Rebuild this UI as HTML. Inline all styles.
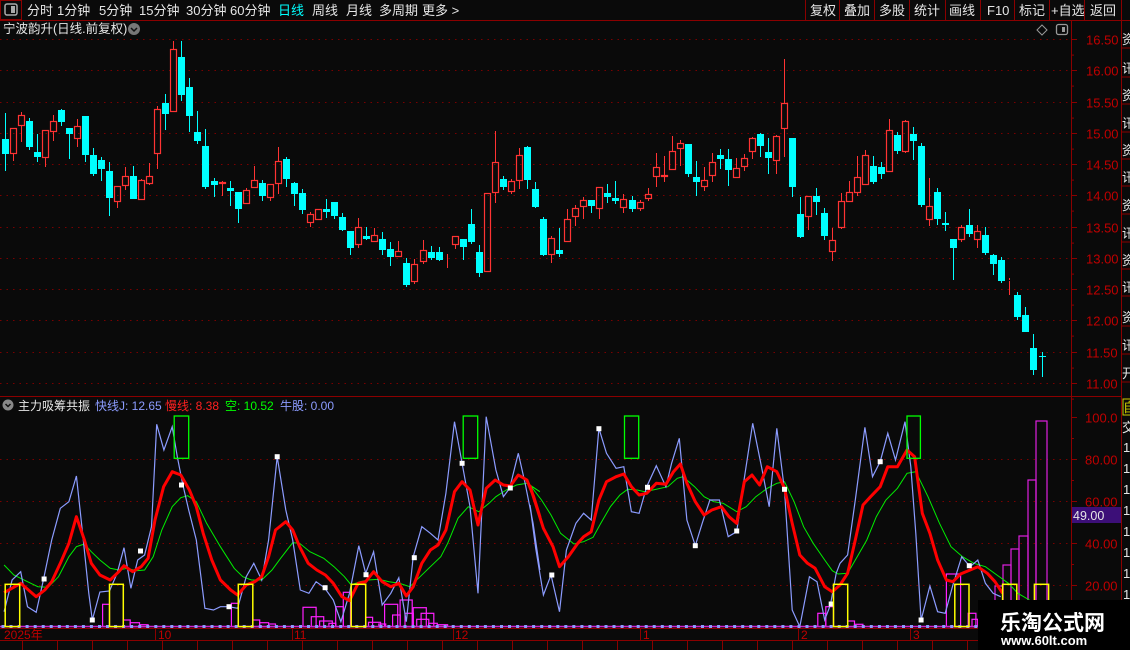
<!DOCTYPE html>
<html><head><meta charset="utf-8">
<style>
html,body{margin:0;padding:0;background:#0a0a0a;overflow:hidden}
body{width:1130px;height:650px;position:relative;font-family:"Liberation Sans","Noto Sans CJK SC",sans-serif}
svg{position:absolute;left:0;top:0}
text{font-family:"Liberation Sans","Noto Sans CJK SC",sans-serif}
</style></head><body>
<svg id="s" width="1130" height="650" xmlns="http://www.w3.org/2000/svg">
<rect width="1130" height="650" fill="#0a0a0a"/>
<!-- toolbar -->
<rect x="0" y="0" width="1130" height="20" fill="#0a0a0a"/>
<line x1="0" y1="20.5" x2="1130" y2="20.5" stroke="#8b0000"/>
<rect x="0.5" y="0.5" width="21" height="19" fill="none" stroke="#8b0000"/>
<rect x="5" y="4" width="12" height="11" rx="2" fill="none" stroke="#aaa" stroke-width="1.5"/>
<rect x="11" y="6" width="4" height="7" fill="#aaa"/>
<g font-size="13" fill="#e6e6e6">
<text x="27" y="15">分时</text><text x="57" y="15">1分钟</text><text x="99" y="15">5分钟</text>
<text x="139" y="15">15分钟</text><text x="186" y="15">30分钟</text><text x="230" y="15">60分钟</text>
<text x="278" y="15" fill="#00ffff">日线</text><text x="312" y="15">周线</text><text x="346" y="15">月线</text>
<text x="379" y="15">多周期</text><text x="422" y="15">更多 &gt;</text>
</g>
<g stroke="#8b0000"><line x1="805.5" y1="0" x2="805.5" y2="20"/><line x1="839.5" y1="0" x2="839.5" y2="20"/><line x1="874.5" y1="0" x2="874.5" y2="20"/><line x1="909.5" y1="0" x2="909.5" y2="20"/><line x1="945.5" y1="0" x2="945.5" y2="20"/><line x1="980.5" y1="0" x2="980.5" y2="20"/><line x1="1014.5" y1="0" x2="1014.5" y2="20"/><line x1="1049.5" y1="0" x2="1049.5" y2="20"/><line x1="1084.5" y1="0" x2="1084.5" y2="20"/><line x1="1121.5" y1="0" x2="1121.5" y2="20"/></g>
<g font-size="13" fill="#e6e6e6">
<text x="810" y="15">复权</text><text x="844" y="15">叠加</text><text x="879" y="15">多股</text><text x="914" y="15">统计</text>
<text x="949" y="15">画线</text><text x="987" y="15">F10</text><text x="1019" y="15">标记</text><text x="1051" y="15">+自选</text><text x="1090" y="15">返回</text>
</g>
<!-- title -->
<text x="3" y="33" font-size="12.5" fill="#e6e6e6">宁波韵升(日线.前复权)</text>
<circle cx="134" cy="29" r="6" fill="#777"/><path d="M131 28 L134 31 L137 28" stroke="#111" stroke-width="1.5" fill="none"/>
<path d="M1042 25 L1047 30 L1042 35 L1037 30 Z" fill="none" stroke="#999"/>
<rect x="1056.5" y="24.5" width="11" height="10" rx="2" fill="none" stroke="#999" stroke-width="1.3"/><rect x="1062" y="27" width="3" height="5" fill="#999"/>
<!-- axes -->
<line x1="1071.5" y1="21" x2="1071.5" y2="650" stroke="#8b0000"/>
<line x1="1121.5" y1="21" x2="1121.5" y2="650" stroke="#8b0000"/>
<line x1="0" y1="396.5" x2="1121" y2="396.5" stroke="#8b0000"/>
<line x1="0" y1="628.5" x2="1130" y2="628.5" stroke="#8b0000"/>
<line x1="0" y1="640.5" x2="1130" y2="640.5" stroke="#8b0000"/>
<g id="g"></g>
<!-- indicator title -->
<circle cx="8" cy="405" r="5.5" fill="#888"/><path d="M5.5 404 L8 406.5 L10.5 404" stroke="#111" stroke-width="1.5" fill="none"/>
<g font-size="12">
<text x="18" y="410" fill="#e6e6e6">主力吸筹共振</text>
<text x="95" y="410" fill="#8c9cff">快线J: 12.65</text>
<text x="165" y="410" fill="#ff2020">慢线: 8.38</text>
<text x="225" y="410" fill="#00ff00">空: 10.52</text>
<text x="280" y="410" fill="#8c9cff">牛股: 0.00</text>
</g>
<!-- 49.00 box -->
<rect x="1072" y="507" width="49" height="16" fill="#3c0f78"/>
<text x="1073" y="520" font-size="12.5" fill="#e6e6e6">49.00</text>
<!-- date labels -->
<g font-size="12" fill="#c00000">
<text x="4" y="639">2025年</text><text x="158" y="639">10</text><text x="294" y="639">11</text><text x="455" y="639">12</text>
<text x="643" y="639">1</text><text x="801" y="639">2</text><text x="913" y="639">3</text>
</g>
<g stroke="#8b0000"><line x1="155.5" y1="628" x2="155.5" y2="640"/><line x1="292.5" y1="628" x2="292.5" y2="640"/><line x1="453.5" y1="628" x2="453.5" y2="640"/><line x1="640.5" y1="628" x2="640.5" y2="640"/><line x1="798.5" y1="628" x2="798.5" y2="640"/><line x1="910.5" y1="628" x2="910.5" y2="640"/></g>
<!-- right strip -->
<g fill="#e6e6e6" font-size="13" clip-path="url(#cp)">
</g>
<clipPath id="cp"><rect x="1122" y="21" width="8" height="629"/></clipPath>
<g id="strip" clip-path="url(#cp)" font-size="13" fill="#e6e6e6"></g>
<!-- watermark -->
<rect x="978" y="600" width="152" height="50" fill="#000"/>
<text x="1000" y="630" font-size="21" font-weight="bold" fill="#fff" font-family="Noto Serif CJK SC, serif">乐淘公式网</text>
<text x="1001" y="645" font-size="13" font-weight="bold" fill="#fff" font-family="Liberation Serif, serif">www.60lt.com</text>
</svg>
<script>
var g=document.getElementById('g'),o='';
function L(x1,y1,x2,y2,c,w,extra){o+='<line x1="'+x1+'" y1="'+y1+'" x2="'+x2+'" y2="'+y2+'" stroke="'+c+'" stroke-width="'+(w||1)+'" '+(extra||'')+'/>';}
// gridlines top
for(var i=0;i<12;i++){var p=16.5-i*0.5;var y=Math.round(39+(16.5-p)*62.55)+0.5;
 L(0,y,1071,y,'#7a0000',1,'stroke-dasharray="1.5,5"');L(1071,y,1077,y,'#8b0000');
 o+='<text x="1086" y="'+(y+5)+'" font-size="13" fill="#c00000">'+p.toFixed(2)+'</text>';
 L(1071,y+15.6,1074,y+15.6,'#8b0000');}
// gridlines bottom
var bl=[[100,'100.0'],[80,'80.00'],[60,'60.00'],[40,'40.00'],[20,'20.00']];
bl.forEach(function(b){var y=Math.round(417+(100-b[0])*2.1)+0.5;
 if(b[0]<100)L(0,y,1071,y,'#7a0000',1,'stroke-dasharray="1.5,5"');L(1071,y,1077,y,'#8b0000');
 o+='<text x="1085" y="'+(y+5)+'" font-size="13" fill="#c00000">'+b[1]+'</text>';L(1071,y+21,1074,y+21,'#8b0000');});
// candles
var A=[['c',312,356,234,407],['r',280,358,280,377],['r',241,274,231,320],['c',258,335,249,344],['c',351,365,297,380],['r',286,368,286,395],['r',259,292,240,317],['c',225,260,222,272],['c',279,296,279,371],['r',274,313,252,335],['c',243,359,243,380],['c',360,416,339,422],['c',375,401,366,437],['c',408,488,381,542],['r',454,502,454,518],['r',424,454,396,464],['c',423,491,393,491],['r',436,494,432,496],['r',424,446,384,449],['r',223,358,213,401],['c',204,236,177,284],['r',43,232,18,232],['c',66,179,18,198],['c',156,242,129,290],['c',291,317,228,326],['c',333,455,282,461],['c',438,449,429,485],['r',441,448,438,482],['c',459,467,438,512],['c',471,521,471,563],['r',466,508,459,508],['r',436,460,393,460],['c',444,482,436,497],['r',448,490,448,497],['r',379,448,336,476],['c',372,431,365,455],['c',444,476,440,512],['c',474,524,462,536],['r',538,565,530,575],['r',523,556,523,556],['c',521,530,492,548],['c',501,542,501,551],['c',546,584,534,587],['c',588,638,588,659],['r',577,631,549,640],['c',602,611,576,616],['r',601,622,580,622],['c',612,644,591,659],['c',642,665,622,692],['r',649,667,618,667],['c',684,749,669,755],['r',688,740,673,746],['r',646,682,615,686],['c',651,668,633,674],['c',651,674,636,678],['r',653,658,653,698],['r',604,631,604,641],['c',612,635,612,674],['c',567,620,522,626],['c',651,713,630,725],['r',475,712,475,712],['r',382,475,288,503],['c',432,455,423,464],['r',439,472,432,476],['r',361,439,339,462],['c',336,434,333,461]];
var B=[['c',402,455,381,458],['c',492,599,487,602],['r',550,601,544,623],['c',585,596,519,605],['r',493,562,462,562],['r',460,487,450,512],['r',436,457,427,491],['c',435,452,435,473],['r',397,463,397,491],['c',414,425,387,443],['c',429,437,378,446],['r',433,460,417,473],['c',435,461,423,470],['r',442,463,436,469],['r',418,433,400,437],['r',337,367,294,395],['r',361,367,303,380],['r',289,344,243,344],['r',265,283,255,332],['c',267,356,267,365],['c',366,380,318,422],['r',376,397,336,407],['r',322,364,294,380],['c',300,311,282,341],['c',312,344,282,392],['r',340,370,309,370],['r',310,337,297,347],['r',250,292,246,311],['c',237,272,234,305],['c',291,308,249,356],['r',244,319,240,356],['r',145,223,12,305],['c',249,395,249,425],['c',477,545,426,548],['r',424,487,424,524],['c',423,440,399,479],['c',474,542,459,554],['r',556,592,519,617],['r',439,518,415,521],['r',412,442,378,442],['r',367,415,303,422],['r',301,391,285,391],['c',333,380,303,386],['c',336,356,321,371],['r',226,352,192,352],['c',240,287,231,296],['r',199,292,195,295],['c',237,257,216,314],['c',273,449,264,455],['r',454,496,369,512],['c',411,491,399,509],['c',504,509,471,527],['c',552,580,552,674],['r',517,556,511,560],['c',510,536,462,545],['r',529,556,511,578],['c',540,593,516,599],['c',600,626,597,659],['c',615,677,605,683],['r',676,679,669,719],['c',720,785,711,794],['c',780,832,756,832],['c',879,944,837,959],['c',903,907,891,965]];
var C=[];A.forEach(function(a){C.push([a[0],a[1]/3+35,a[2]/3+35,a[3]/3+35,a[4]/3+35]);});
B.forEach(function(a){C.push([a[0],a[1]/3+55,a[2]/3+55,a[3]/3+55,a[4]/3+55]);});
var N=C.length,sp=(1041.5-4.5)/(N-1);
C.forEach(function(c,i){var x=Math.round(4.5+i*sp)+0.5;var bt=Math.round(c[1]),bb=Math.round(c[2]),wt=Math.round(c[3]),wb=Math.round(c[4]);if(bb-bt<1)bb=bt+1;
 if(c[0]=='r'){var col='#ff3333';if(wt<bt)L(x,wt,x,bt,col);if(wb>bb)L(x,bb,x,wb,col);
  o+='<rect x="'+(x-3)+'" y="'+(bt+0.5)+'" width="6" height="'+(bb-bt-1)+'" fill="none" stroke="'+col+'" stroke-width="1.2"/>';}
 else{var col='#00ffff';L(x,wt,x,wb,col);o+='<rect x="'+(x-3.5)+'" y="'+bt+'" width="7" height="'+(bb-bt)+'" fill="'+col+'"/>';}});
// indicator
function P(arr,sx,ox){return arr.map(function(p){return (p[0]/sx+ox).toFixed(1)+','+(p[1]/3+400).toFixed(1);}).join(' ');}
var s9=2.904,s10=2.613;
var b9=[[12,635],[35,540],[60,515],[80,620],[105,637],[125,545],[150,420],[175,325],[200,305],[222,228],[240,400],[258,580],[268,660],[290,576],[318,573],[340,520],[360,443],[380,565],[400,480],[420,465],[440,380],[455,73],[476,150],[500,80],[515,170],[530,250],[548,330],[570,420],[595,625],[620,630],[640,620],[665,620],[690,625],[715,530],[737,490],[760,540],[780,420],[805,170],[830,330],[850,420],[872,570],[897,580],[918,545],[942,563],[968,600],[990,665],[1015,580],[1042,437],[1062,520],[1085,455],[1110,615],[1135,580],[1158,533],[1180,665],[1200,470],[1225,380],[1250,400],[1272,420],[1295,280],[1320,65],[1342,190],[1365,320],[1388,580],[1412,50],[1440,210],[1462,290],[1480,265],[1505,160],[1525,250],[1548,370],[1568,510]];
var b10=[[0,315],[15,445],[35,585],[55,525],[77,635],[95,450],[120,370],[140,340],[160,360],[180,85],[200,160],[225,205],[245,200],[265,335],[285,340],[305,260],[330,197],[355,260],[370,190],[390,115],[410,360],[432,437],[450,370],[470,300],[495,300],[518,410],[540,395],[560,235],[582,70],[605,200],[625,320],[645,85],[665,270],[685,630],[705,680],[730,530],[750,545],[770,660],[785,615],[800,520],[810,490],[830,465],[850,300],[875,82],[895,230],[915,185],[935,100],[955,180],[980,65],[995,200],[1008,400],[1022,660],[1045,558],[1065,635],[1085,640],[1105,555],[1128,470],[1150,500],[1170,480],[1190,550],[1210,580],[1230,590]];
var r9=[[12,578],[60,550],[105,590],[130,570],[150,545],[175,490],[200,430],[222,350],[245,420],[265,490],[290,525],[320,540],[345,515],[360,497],[385,515],[410,500],[430,475],[450,360],[475,260],[500,215],[525,225],[550,270],[570,320],[590,400],[615,480],[640,540],[670,570],[690,585],[715,555],[740,545],[760,530],[780,470],[800,390],[830,365],[850,390],[870,440],[895,490],[920,510],[945,525],[968,550],[993,590],[1015,602],[1040,550],[1062,545],[1085,515],[1110,545],[1135,560],[1158,550],[1180,588],[1200,560],[1225,490],[1250,450],[1272,435],[1295,390],[1320,275],[1342,245],[1365,270],[1388,375],[1412,265],[1438,240],[1462,255],[1482,258],[1505,225],[1530,240],[1550,290],[1568,350]];
var r10=[[0,258],[35,385],[60,440],[77,500],[100,470],[125,430],[140,410],[160,395],[180,300],[200,245],[225,230],[245,222],[265,260],[285,285],[305,280],[330,250],[355,253],[375,215],[393,192],[410,250],[432,305],[455,345],[475,330],[500,320],[520,350],[540,370],[560,245],[580,225],[600,255],[620,200],[645,215],[665,265],[685,370],[705,465],[725,490],[745,505],[770,560],[790,575],[810,555],[830,520],[850,420],[870,315],[890,290],[915,260],[935,200],[960,200],[985,150],[1005,170],[1025,340],[1045,400],[1065,480],[1088,540],[1105,545],[1125,522],[1150,510],[1170,500],[1195,520],[1215,545],[1235,580]];
var g9=[[12,495],[40,525],[80,545],[110,560],[140,562],[170,530],[200,470],[222,440],[245,432],[265,455],[290,480],[320,505],[345,510],[370,505],[395,512],[420,510],[445,470],[470,390],[500,320],[525,293],[545,287],[570,305],[600,370],[640,440],[680,505],[705,530],[730,540],[760,540],[790,510],[815,475],[850,428],[870,430],[900,455],[940,475],[970,500],[1000,530],[1020,555],[1045,545],[1070,540],[1100,538],[1130,545],[1160,550],[1190,560],[1220,530],[1250,500],[1280,470],[1300,430],[1330,355],[1360,320],[1390,335],[1420,310],[1440,290],[1470,270],[1500,255],[1530,250],[1568,275]];
var g10=[[0,255],[30,300],[55,345],[80,400],[115,432],[140,425],[165,412],[185,370],[210,320],[235,285],[255,268],[280,270],[300,275],[330,268],[360,260],[385,235],[400,230],[430,260],[455,290],[480,305],[505,310],[540,335],[565,320],[590,290],[620,265],[645,250],[665,245],[690,305],[715,380],[740,430],[770,480],[790,512],[805,522],[830,520],[855,470],[880,420],[905,350],[930,300],[960,265],[985,220],[1008,215],[1040,290],[1070,370],[1100,440],[1130,470],[1160,490],[1190,500],[1220,525],[1250,550],[1275,580],[1305,600]];
// magenta bars (x1,x2,ytop) in zoom coords
function R(x1,x2,y1,y2,col,sx,ox,w){var a=x1/sx+ox,b=x2/sx+ox;o+='<rect x="'+a.toFixed(1)+'" y="'+(y1/3+400).toFixed(1)+'" width="'+(b-a).toFixed(1)+'" height="'+((y2-y1)/3).toFixed(1)+'" fill="none" stroke="'+col+'" stroke-width="'+(w||1.2)+'"/>';}
var m9=[[298,318,613],[358,378,660],[378,405,668],[405,430,674],[672,692,610],[734,754,660],[754,780,668],[780,800,672],[880,918,622],[904,940,650],[928,965,663],[955,975,670],[975,997,620],[997,1018,577],[1062,1082,652],[1070,1105,667],[1100,1120,672],[1117,1155,613],[1140,1162,645],[1162,1197,600],[1176,1200,640],[1200,1238,623],[1223,1260,640],[1210,1245,658],[1245,1270,670],[1270,1300,674]];
m9.forEach(function(m){R(m[0],m[1],m[2],680,'#ff20ff',s9,0);});
var m10=[[752,773,640],[773,793,620],[830,848,663],[848,870,673],[1088,1125,522],[1145,1165,640],[1155,1170,658]];
m10.forEach(function(m){R(m[0],m[1],m[2],680,'#ff20ff',s10,530);});
[[995,1003,586],[1003,1011,565],[1011,1019,549],[1019,1028,536],[1028,1036,480],[1036,1047,421]].forEach(function(m){o+='<rect x="'+m[0]+'" y="'+m[2]+'" width="'+(m[1]-m[0])+'" height="'+(627-m[2])+'" fill="none" stroke="#e020e0" stroke-width="1.2"/>';});
// baseline
L(0,626.5,1071,626.5,'#d020d0',1.5);
for(var x=3;x<1070;x+=8.04){o+='<rect x="'+(x-1.5).toFixed(1)+'" y="625" width="3" height="3" fill="#8c9cff"/>';}
o+='<polyline points="'+P(g9,s9,0)+' '+P(g10,s10,530)+'" fill="none" stroke="#00ee00" stroke-width="1"/>';
o+='<polyline points="'+P(b9,s9,0)+' '+P(b10,s10,530)+'" fill="none" stroke="#8c9cff" stroke-width="1.2"/>';
o+='<polyline points="'+P(r9,s9,0)+' '+P(r10,s10,530)+'" fill="none" stroke="#ff0000" stroke-width="3" stroke-linejoin="round"/>';
// squares
[[128,537],[268,660],[408,453],[527,255],[665,620],[805,170],[944,563],[1063,524],[1203,473],[1342,190],[1482,264]].forEach(function(p){o+='<rect x="'+(p[0]/s9-2.5).toFixed(1)+'" y="'+(p[1]/3+400-2.5).toFixed(1)+'" width="5" height="5" fill="#fff"/>';});
[[57,525],[180,86],[307,262],[432,437],[540,393],[665,268],[787,612],[915,185],[1022,660],[1148,497]].forEach(function(p){o+='<rect x="'+(p[0]/s10+530-2.5).toFixed(1)+'" y="'+(p[1]/3+400-2.5).toFixed(1)+'" width="5" height="5" fill="#fff"/>';});
// green & yellow boxes
[[506,548],[1345,1387]].forEach(function(r){R(r[0],r[1],48,175,'#00ff00',s9,0,1.3);});
[[247,284],[985,1020]].forEach(function(r){R(r[0],r[1],48,175,'#00ff00',s10,530,1.3);});
[[15,57],[318,358],[692,734],[1020,1062]].forEach(function(r){R(r[0],r[1],553,680,'#ffff00',s9,0,1.5);});
[[793,830],[1110,1147],[1235,1272],[1318,1355]].forEach(function(r){R(r[0],r[1],553,680,'#ffff00',s10,530,1.5);});
// bottom row ticks
for(var x=22;x<1130;x+=35){L(x+0.5,640,x+0.5,650,'#8b0000');}
g.innerHTML=o;
// strip
var st='',ch='资讯资讯资讯资讯资讯资讯开资讯资讯外技术';
var ys=[44,73,100,128,155,182,210,238,265,292,322,350,378];
ys.forEach(function(y,i){st+='<text x="1122" y="'+y+'">'+ch[i%ch.length]+'</text>';st+='<line x1="1122" y1="'+(y+4)+'" x2="1130" y2="'+(y+4)+'" stroke="#8b0000"/>';});
st+='<rect x="1123" y="399" width="8" height="16" fill="none" stroke="#cccc00"/><text x="1123" y="412" fill="#cccc00">自</text>';
st+='<text x="1122" y="432">交</text>';
for(var y=452;y<625;y+=21)st+='<text x="1123" y="'+y+'">1</text>';
document.getElementById('strip').innerHTML=st;
</script>
</body></html>
